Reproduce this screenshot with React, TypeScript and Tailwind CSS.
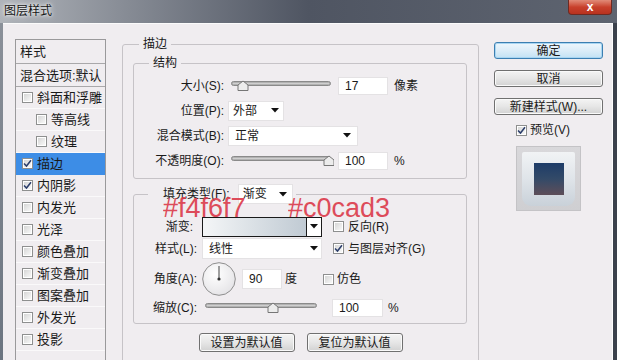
import React from 'react'

const LIST: { label: string; indent?: boolean; checked?: boolean; selected?: boolean }[] = [
  { label: '斜面和浮雕' },
  { label: '等高线', indent: true },
  { label: '纹理', indent: true },
  { label: '描边', checked: true, selected: true },
  { label: '内阴影', checked: true },
  { label: '内发光' },
  { label: '光泽' },
  { label: '颜色叠加' },
  { label: '渐变叠加' },
  { label: '图案叠加' },
  { label: '外发光' },
  { label: '投影' },
]

function Check({ checked }: { checked?: boolean }) {
  return (
    <span className="w-[11px] h-[11px] border border-[#8e8f8f] bg-white p-px flex shrink-0">
      <span className="flex-1 bg-gradient-to-br from-[#d6d6d6] to-[#f8f8f8] flex items-center justify-center">
        {checked && (
          <svg width="7" height="7" viewBox="0 0 7 7" className="overflow-visible">
            <path d="M0 3.4 L2.5 6 L7 0.2" fill="none" stroke="#2c3e6b" strokeWidth="1.5" />
          </svg>
        )}
      </span>
    </span>
  )
}

function Arrow() {
  return (
    <svg width="8" height="5" viewBox="0 0 8 5" className="shrink-0">
      <path d="M0 0 H8 L4 4.5 Z" fill="#111" />
    </svg>
  )
}

function Slider({ width, thumb }: { width: number; thumb: number }) {
  return (
    <svg width={width} height={14} className="shrink-0">
      <rect x={3.5} y={2.5} width={width - 7} height={4} rx={2} fill="#b2b2b2" stroke="#8a8a8a" />
      <line x1={5} y1={4.5} x2={width - 5} y2={4.5} stroke="#cfcfcf" />
      <path
        d={`M${thumb} 2 L${thumb + 5} 6 L${thumb + 5} 11.5 L${thumb - 5} 11.5 L${thumb - 5} 6 Z`}
        fill="#ececec"
        stroke="#767676"
      />
    </svg>
  )
}

function Field({ value, w, h = 18 }: { value: string; w: string; h?: number }) {
  return (
    <div
      className={`${w} bg-white border border-[#e4e2e4] flex items-center pl-[6px] text-[12px] shrink-0`}
      style={{ height: h }}
    >
      {value}
    </div>
  )
}

function Button({ label, primary, w = 'w-[109px]' }: { label: string; primary?: boolean; w?: string }) {
  return (
    <div
      className={`${w} h-[17px] rounded-[3px] border flex items-center justify-center text-[12px] ${
        primary
          ? 'border-[#3c7fb1] bg-gradient-to-b from-[#eef7fd] via-[#dcedf8] to-[#c3e2f4] shadow-[inset_0_0_0_1px_#a9d6f2]'
          : 'border-[#707070] bg-gradient-to-b from-[#f4f4f4] via-[#e6e6e6] to-[#d2d2d2] shadow-[inset_0_0_0_1px_#fafafa]'
      }`}
    >
      {label}
    </div>
  )
}

function StyleList() {
  return (
    <div className="mt-[15px] w-[91px] h-[340px] border border-[#9a999b] shrink-0 flex flex-col text-[13px]">
      <div className="h-[24px] border-b border-[#a9a8aa] flex items-center pl-[4px]">样式</div>
      <div className="h-[23px] border-b border-[#a9a8aa] flex items-center pl-[4px] whitespace-nowrap">混合选项:默认</div>
      {LIST.map(item => (
        <div
          key={item.label}
          className={`h-[22px] border-b flex items-center gap-[4px] ${item.indent ? 'pl-[20px]' : 'pl-[6px]'} ${
            item.selected ? 'bg-[#3d8de6] border-[#3d8de6]' : 'border-[#faf9fa]'
          }`}
        >
          <Check checked={item.checked} />
          <span className="whitespace-nowrap">{item.label}</span>
        </div>
      ))}
    </div>
  )
}

function Row({ label, labelW, children, h = 25 }: { label: string; labelW: string; children?: React.ReactNode; h?: number }) {
  return (
    <div className="flex items-center" style={{ height: h }}>
      <div className={`${labelW} text-right whitespace-nowrap shrink-0`}>{label}</div>
      {children}
    </div>
  )
}

function Dial() {
  return (
    <svg width="34" height="34" viewBox="0 0 34 34" className="shrink-0">
      <defs>
        <radialGradient id="dialfill" cx="40%" cy="35%" r="70%">
          <stop offset="0" stopColor="#ffffff" />
          <stop offset="1" stopColor="#e4e3e6" />
        </radialGradient>
      </defs>
      <circle cx="17" cy="17" r="16.3" fill="url(#dialfill)" stroke="#8e8e8e" />
      <line x1="17" y1="17" x2="17" y2="4" stroke="#444" strokeWidth="1" />
      <circle cx="17" cy="17" r="1.6" fill="#333" />
    </svg>
  )
}

function StrokeGroup() {
  return (
    <fieldset className="mt-[11px] ml-[16px] w-[357px] h-[360px] border border-[#c6c3c7] rounded-[3px] shrink-0 pb-[12px]">
      <legend className="ml-[16px] px-[4px] h-[18px] leading-[18px] text-[12px]">描边</legend>

      <fieldset className="mt-[1px] ml-[10px] mr-[11px] border border-[#c6c3c7] rounded-[3px] pt-[1px] pb-[5px]">
        <legend className="ml-[15px] px-[4px] h-[18px] leading-[18px]">结构</legend>
        <Row label="大小(S):" labelW="w-[90px]">
          <div className="ml-[4px]" />
          <Slider width={106} thumb={15} />
          <div className="ml-[4px]" />
          <Field value="17" w="w-[50px]" />
          <span className="ml-[6px]">像素</span>
        </Row>
        <Row label="位置(P):" labelW="w-[90px]">
          <div className="ml-[4px] w-[56px] h-[20px] bg-white border border-[#e4e2e4] flex items-center justify-between pl-[4px] pr-[4px]">
            <span>外部</span>
            <Arrow />
          </div>
        </Row>
        <Row label="混合模式(B):" labelW="w-[90px]">
          <div className="ml-[4px] w-[130px] h-[20px] bg-white border border-[#e4e2e4] flex items-center justify-between pl-[6px] pr-[6px]">
            <span>正常</span>
            <Arrow />
          </div>
        </Row>
        <Row label="不透明度(O):" labelW="w-[90px]">
          <div className="ml-[4px]" />
          <Slider width={106} thumb={101} />
          <div className="ml-[4px]" />
          <Field value="100" w="w-[50px]" />
          <span className="ml-[6px]">%</span>
        </Row>
      </fieldset>

      <fieldset className="mt-[5px] ml-[10px] mr-[11px] border border-[#c6c3c7] rounded-[3px] pb-[6px]">
        <legend className="ml-[14px] pl-[15px] pr-[3px] h-[20px] flex items-center">
          <span className="whitespace-nowrap">填充类型(F):</span>
          <div className="ml-[8px] w-[55px] h-[20px] bg-white border border-[#e4e2e4] flex items-center justify-between pl-[4px] pr-[5px]">
            <span>渐变</span>
            <Arrow />
          </div>
        </legend>
        <div className="relative pt-[12px] flex flex-col">
          <span className="absolute top-[-9px] left-[29px] text-[27px] leading-[27px] font-['Liberation_Sans',sans-serif] text-[#dc3a4a] opacity-90">
            #f4f6f7
          </span>
          <span className="absolute top-[-9px] left-[154px] text-[27px] leading-[27px] font-['Liberation_Sans',sans-serif] text-[#dc3a4a] opacity-90">
            #c0cad3
          </span>
          <Row label="渐变:" labelW="w-[59px]" h={21}>
            <div className="ml-[9px] w-[120px] h-[20px] border border-[#1a1a1a] flex">
              <div className="flex-1 bg-gradient-to-r from-[#f4f6f7] to-[#c0cad3]" />
              <div className="w-[15px] border-l border-[#1a1a1a] bg-white flex items-center justify-center">
                <Arrow />
              </div>
            </div>
            <div className="ml-[11px]" />
            <Check />
            <span className="ml-[4px] whitespace-nowrap">反向(R)</span>
          </Row>
          <div className="mt-[1px]" />
          <Row label="样式(L):" labelW="w-[63px]" h={21}>
            <div className="ml-[5px] w-[120px] h-[21px] bg-white border border-[#e4e2e4] flex items-center justify-between pl-[6px] pr-[3px]">
              <span>线性</span>
              <Arrow />
            </div>
            <div className="ml-[11px]" />
            <Check checked />
            <span className="ml-[4px] whitespace-nowrap">与图层对齐(G)</span>
          </Row>
          <div className="mt-[3px]" />
          <Row label="角度(A):" labelW="w-[63px]" h={34}>
            <div className="ml-[5px]" />
            <Dial />
            <div className="ml-[6px]" />
            <Field value="90" w="w-[40px]" h={20} />
            <span className="ml-[3px]">度</span>
            <div className="ml-[26px]" />
            <Check />
            <span className="ml-[3px]">仿色</span>
          </Row>
          <div className="mt-[3px]" />
          <Row label="缩放(C):" labelW="w-[63px]" h={18}>
            <div className="ml-[5px]" />
            <Slider width={118} thumb={71} />
            <div className="ml-[12px]" />
            <Field value="100" w="w-[51px]" />
            <span className="ml-[5px]">%</span>
          </Row>
        </div>
      </fieldset>

      <div className="mt-[9px] flex justify-center gap-[12px]">
        <div className="w-[96px] h-[19px] rounded-[3px] border border-[#707070] bg-gradient-to-b from-[#f4f4f4] via-[#e6e6e6] to-[#d2d2d2] shadow-[inset_0_0_0_1px_#fafafa] flex items-center justify-center">
          设置为默认值
        </div>
        <div className="w-[96px] h-[19px] rounded-[3px] border border-[#707070] bg-gradient-to-b from-[#f4f4f4] via-[#e6e6e6] to-[#d2d2d2] shadow-[inset_0_0_0_1px_#fafafa] flex items-center justify-center">
          复位为默认值
        </div>
      </div>
    </fieldset>
  )
}

function RightColumn() {
  return (
    <div className="mt-[18px] ml-[15px] w-[109px] shrink-0 flex flex-col">
      <Button label="确定" primary />
      <div className="mt-[11px]" />
      <Button label="取消" />
      <div className="mt-[11px]" />
      <Button label="新建样式(W)..." />
      <div className="mt-[8px] h-[14px] pl-[22px] flex items-center gap-[3px]">
        <Check checked />
        <span>预览(V)</span>
      </div>
      <div className="mt-[9px] ml-[22px] w-[65px] h-[65px] bg-gradient-to-b from-[#d9d8db] to-[#cfcfd2] border border-[#c4c3c6] p-[5px] pb-[4px]">
        <div className="w-full h-full rounded-b-[9px] rounded-t-[2px] bg-gradient-to-b from-[#f1f3f5] via-[#dfe4e9] to-[#c9d1d9] flex items-center justify-center">
          <div className="w-[30px] h-[32px] bg-gradient-to-b from-[#1d3c68] via-[#334a68] to-[#5d4d58]" />
        </div>
      </div>
    </div>
  )
}

export default function App() {
  return (
    <div className="w-[617px] h-[360px] overflow-hidden flex flex-col font-['Liberation_Sans','Noto_Sans_CJK_SC',sans-serif] text-[12px] text-[#1a1a1a] leading-none bg-[#4e5460]">
      <div className="h-[23px] shrink-0 flex justify-between bg-gradient-to-r from-[#b0b4ba] via-[#4f5562] to-[#5e6470]">
        <span className="pl-[4px] pt-[4px] text-[12px] leading-[14px] text-[#151515] [text-shadow:0_0_6px_#fff,0_0_3px_#fff]">
          图层样式
        </span>
        <div className="mr-[5px] w-[44px] h-[15px] rounded-b-[4px] border border-t-0 border-[#6e2a22] bg-gradient-to-b from-[#e08a78] via-[#c8402c] to-[#b8321f] flex items-center justify-center text-white font-bold text-[12px] leading-none">
          x
        </div>
      </div>
      <div className="flex flex-1 min-h-0">
        <div className="w-[3px] bg-gradient-to-b from-[#8a9099] to-[#6b7480] shrink-0" />
        <div className="flex-1 bg-[#f0edf0] flex items-start pl-[12px] border-t border-[#fbfbfb]">
          <StyleList />
          <StrokeGroup />
          <RightColumn />
        </div>
        <div className="w-[5px] shrink-0 border-l border-[#fdfdfd] bg-[#3b414c]" />
      </div>
    </div>
  )
}
